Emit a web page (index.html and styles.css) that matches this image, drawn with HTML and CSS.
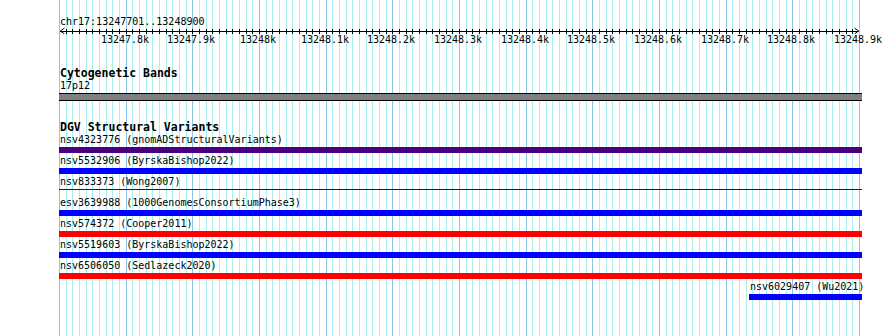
FILE: index.html
```html
<!DOCTYPE html>
<html lang="en">
<head>
    <meta charset="UTF-8">
    <title>chr17:13247701..13248900</title>
    <link rel="stylesheet" href="styles.css">
</head>
<body>

<div class="view">
    <div class="grid" id="grid"></div>

    <div class="location">chr17:13247701..13248900</div>
    <svg class="ruler" width="803" height="7" viewBox="0 0 803 7">
        <path id="rulerTicks" d="" stroke="#000" stroke-width="1" fill="none" shape-rendering="crispEdges"/>
        <path d="M1.5 4L5.5 1M1.5 4L5.5 7M799.5 4L795.5 1M799.5 4L795.5 7" stroke="#000" stroke-width="1" fill="none"/>
    </svg>
    <div class="ruler-labels" id="rulerLabels"></div>

    <div class="track track-bands">
        <div class="track-label">Cytogenetic Bands</div>
        <div class="feature-name">17p12</div>
        <div class="band"></div>
    </div>

    <div class="track track-dgv">
        <div class="track-label">DGV Structural Variants</div>

        <div class="feature">
            <div class="feature-name">nsv4323776 (gnomADStructuralVariants)</div>
            <div class="bar bar-indigo"></div>
        </div>
        <div class="feature">
            <div class="feature-name">nsv5532906 (ByrskaBishop2022)</div>
            <div class="bar bar-blue"></div>
        </div>
        <div class="feature">
            <div class="feature-name">nsv833373 (Wong2007)</div>
            <div class="bar-slot"><div class="bar-thin"></div></div>
        </div>
        <div class="feature">
            <div class="feature-name">esv3639988 (1000GenomesConsortiumPhase3)</div>
            <div class="bar bar-blue"></div>
        </div>
        <div class="feature">
            <div class="feature-name">nsv574372 (Cooper2011)</div>
            <div class="bar bar-red"></div>
        </div>
        <div class="feature">
            <div class="feature-name">nsv5519603 (ByrskaBishop2022)</div>
            <div class="bar bar-blue"></div>
        </div>
        <div class="feature">
            <div class="feature-name">nsv6506050 (Sedlazeck2020)</div>
            <div class="bar bar-red"></div>
        </div>
        <div class="feature feature-right">
            <div class="feature-name">nsv6029407 (Wu2021)</div>
            <div class="bar bar-blue"></div>
        </div>
    </div>
</div>

<script>
    // 1200 bp over 800 px, a gridline every 10 bp
    const start = 13247700, grid = document.getElementById('grid');
    const labels = document.getElementById('rulerLabels');
    let ticks = '';

    for (let k = 0; k <= 120; k++) {
        const x = Math.round(k * 800 / 120);
        const line = document.createElement('div');
        line.className = k % 10 === 0 ? 'gridline major' : 'gridline';
        line.style.left = x + 'px';
        grid.appendChild(line);

        if (k > 0 && k < 120) {
            ticks += `M${x + 0.5} 2V7`;
        }
        if (k > 0 && k % 10 === 0) {
            const label = document.createElement('span');
            label.className = 'ruler-label';
            label.textContent = (start + k * 10) / 1000 + 'k';
            label.style.left = x + 'px';
            labels.appendChild(label);
        }
    }
    document.getElementById('rulerTicks').setAttribute('d', ticks + 'M1 4.5H800');
</script>

</body>
</html>
```

FILE: styles.css
```css
html, body {
    margin: 0;
    padding: 0;
    background-color: #ffffff;
}

body {
    font-family: 'DejaVu Sans Mono', monospace;
    font-size: 10px;
    color: #000000;
    overflow: hidden;
}

.view {
    position: relative;
    z-index: 0;
    width: 803px;
    height: 336px;
    margin-left: 59px;
    padding-top: 16px;
    box-sizing: border-box;
}

/* gridlines sit under the tracks */
.grid {
    position: absolute;
    top: 0;
    left: 0;
    width: 801px;
    height: 336px;
    z-index: -1;
}

.gridline {
    position: absolute;
    top: 0;
    width: 1px;
    height: 100%;
    background-color: #aaeef0;
}

.gridline.major {
    background-color: #8cc6ec;
}

.location {
    line-height: 11px;
    height: 11px;
    padding-left: 1px;
}

.ruler {
    display: block;
}

.ruler-labels {
    position: relative;
    height: 11px;
    line-height: 11px;
}

.ruler-label {
    position: absolute;
    top: 0;
    transform: translateX(-50%);
    margin-left: -1px;
    white-space: nowrap;
}

.track-label {
    font-size: 11.5px;
    font-weight: bold;
    line-height: 13px;
    height: 13px;
    padding-left: 1px;
}

.track-bands {
    margin-top: 22px;
}

.track-dgv {
    margin-top: 20px;
}

.feature-name {
    line-height: 11px;
    height: 11px;
    padding-left: 1px;
    white-space: nowrap;
}

.band {
    margin-top: 2px;
    height: 8px;
    box-sizing: border-box;
    border-top: 1px solid #000000;
    border-bottom: 1px solid #000000;
    background-color: #808080;
}

.feature {
    height: 21px;
}

.feature-right {
    margin-left: 690px;
}

.bar {
    margin-top: 2px;
    height: 6px;
}

.bar-indigo {
    background-color: #4b0082;
}

.bar-blue {
    background-color: #0000ff;
}

.bar-red {
    background-color: #ff0000;
}

.bar-slot {
    margin-top: 2px;
    height: 6px;
}

.bar-thin {
    margin-top: 2px;
    height: 1px;
    background-color: #0000ff;
}
```
